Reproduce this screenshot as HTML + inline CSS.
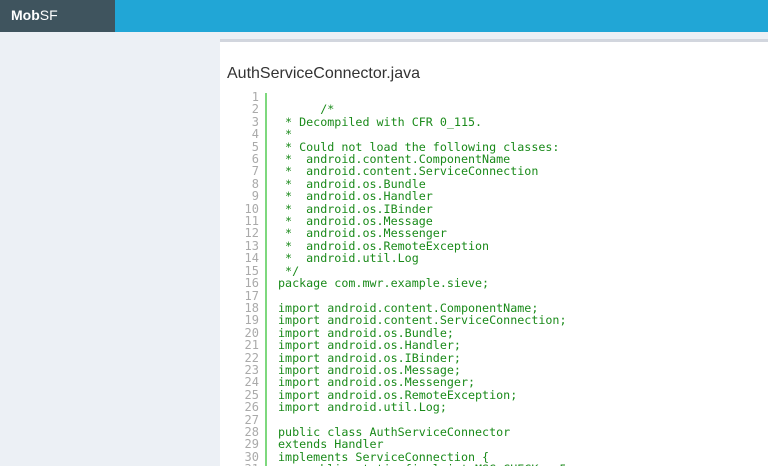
<!DOCTYPE html>
<html style="height:466px;overflow:hidden"><head><meta charset="utf-8"><style>
body{margin:0;width:768px;height:466px;overflow:hidden;background:#ecf0f5;font-family:"Liberation Sans",sans-serif;position:relative}
.top{position:absolute;left:0;top:0;width:768px;height:32px;background:#21a6d6}
.logo{position:absolute;left:0;top:0;width:115px;height:32px;background:#3f545e;color:#fff;font-size:14px;line-height:31px;box-sizing:border-box;padding-left:11px}
.logo b{font-weight:bold}
.box{position:absolute;left:220px;top:39px;width:548px;height:424px;background:#fff;border-top:3px solid #d2d6de;overflow:hidden}
.title{position:absolute;left:7px;top:23px;font-size:16px;color:#333}
.nums{position:absolute;left:0;top:49px;width:39px;text-align:right;font-family:"DejaVu Sans Mono",monospace;font-size:12px;line-height:12.4px;color:#aaa;white-space:pre}
.bar{position:absolute;left:45px;top:51px;width:2px;height:400px;background:#7ed87e}
.code{position:absolute;left:58px;top:49px;font-family:"DejaVu Sans Mono",monospace;font-size:11.7px;line-height:12.4px;color:#1a8a1a;white-space:pre}
</style></head><body>
<div class="top"></div>
<div class="logo"><b>Mob</b>SF</div>
<div class="box">
<div class="title">AuthServiceConnector.java</div>
<div class="nums">1
2
3
4
5
6
7
8
9
10
11
12
13
14
15
16
17
18
19
20
21
22
23
24
25
26
27
28
29
30
31</div>
<div class="bar"></div>
<div class="code">
      /*
 * Decompiled with CFR 0_115.
 *
 * Could not load the following classes:
 *  android.content.ComponentName
 *  android.content.ServiceConnection
 *  android.os.Bundle
 *  android.os.Handler
 *  android.os.IBinder
 *  android.os.Message
 *  android.os.Messenger
 *  android.os.RemoteException
 *  android.util.Log
 */
package com.mwr.example.sieve;

import android.content.ComponentName;
import android.content.ServiceConnection;
import android.os.Bundle;
import android.os.Handler;
import android.os.IBinder;
import android.os.Message;
import android.os.Messenger;
import android.os.RemoteException;
import android.util.Log;

public class AuthServiceConnector
extends Handler
implements ServiceConnection {
    public static final int MSG_CHECK = 5;</div>
</div>
</body></html>
